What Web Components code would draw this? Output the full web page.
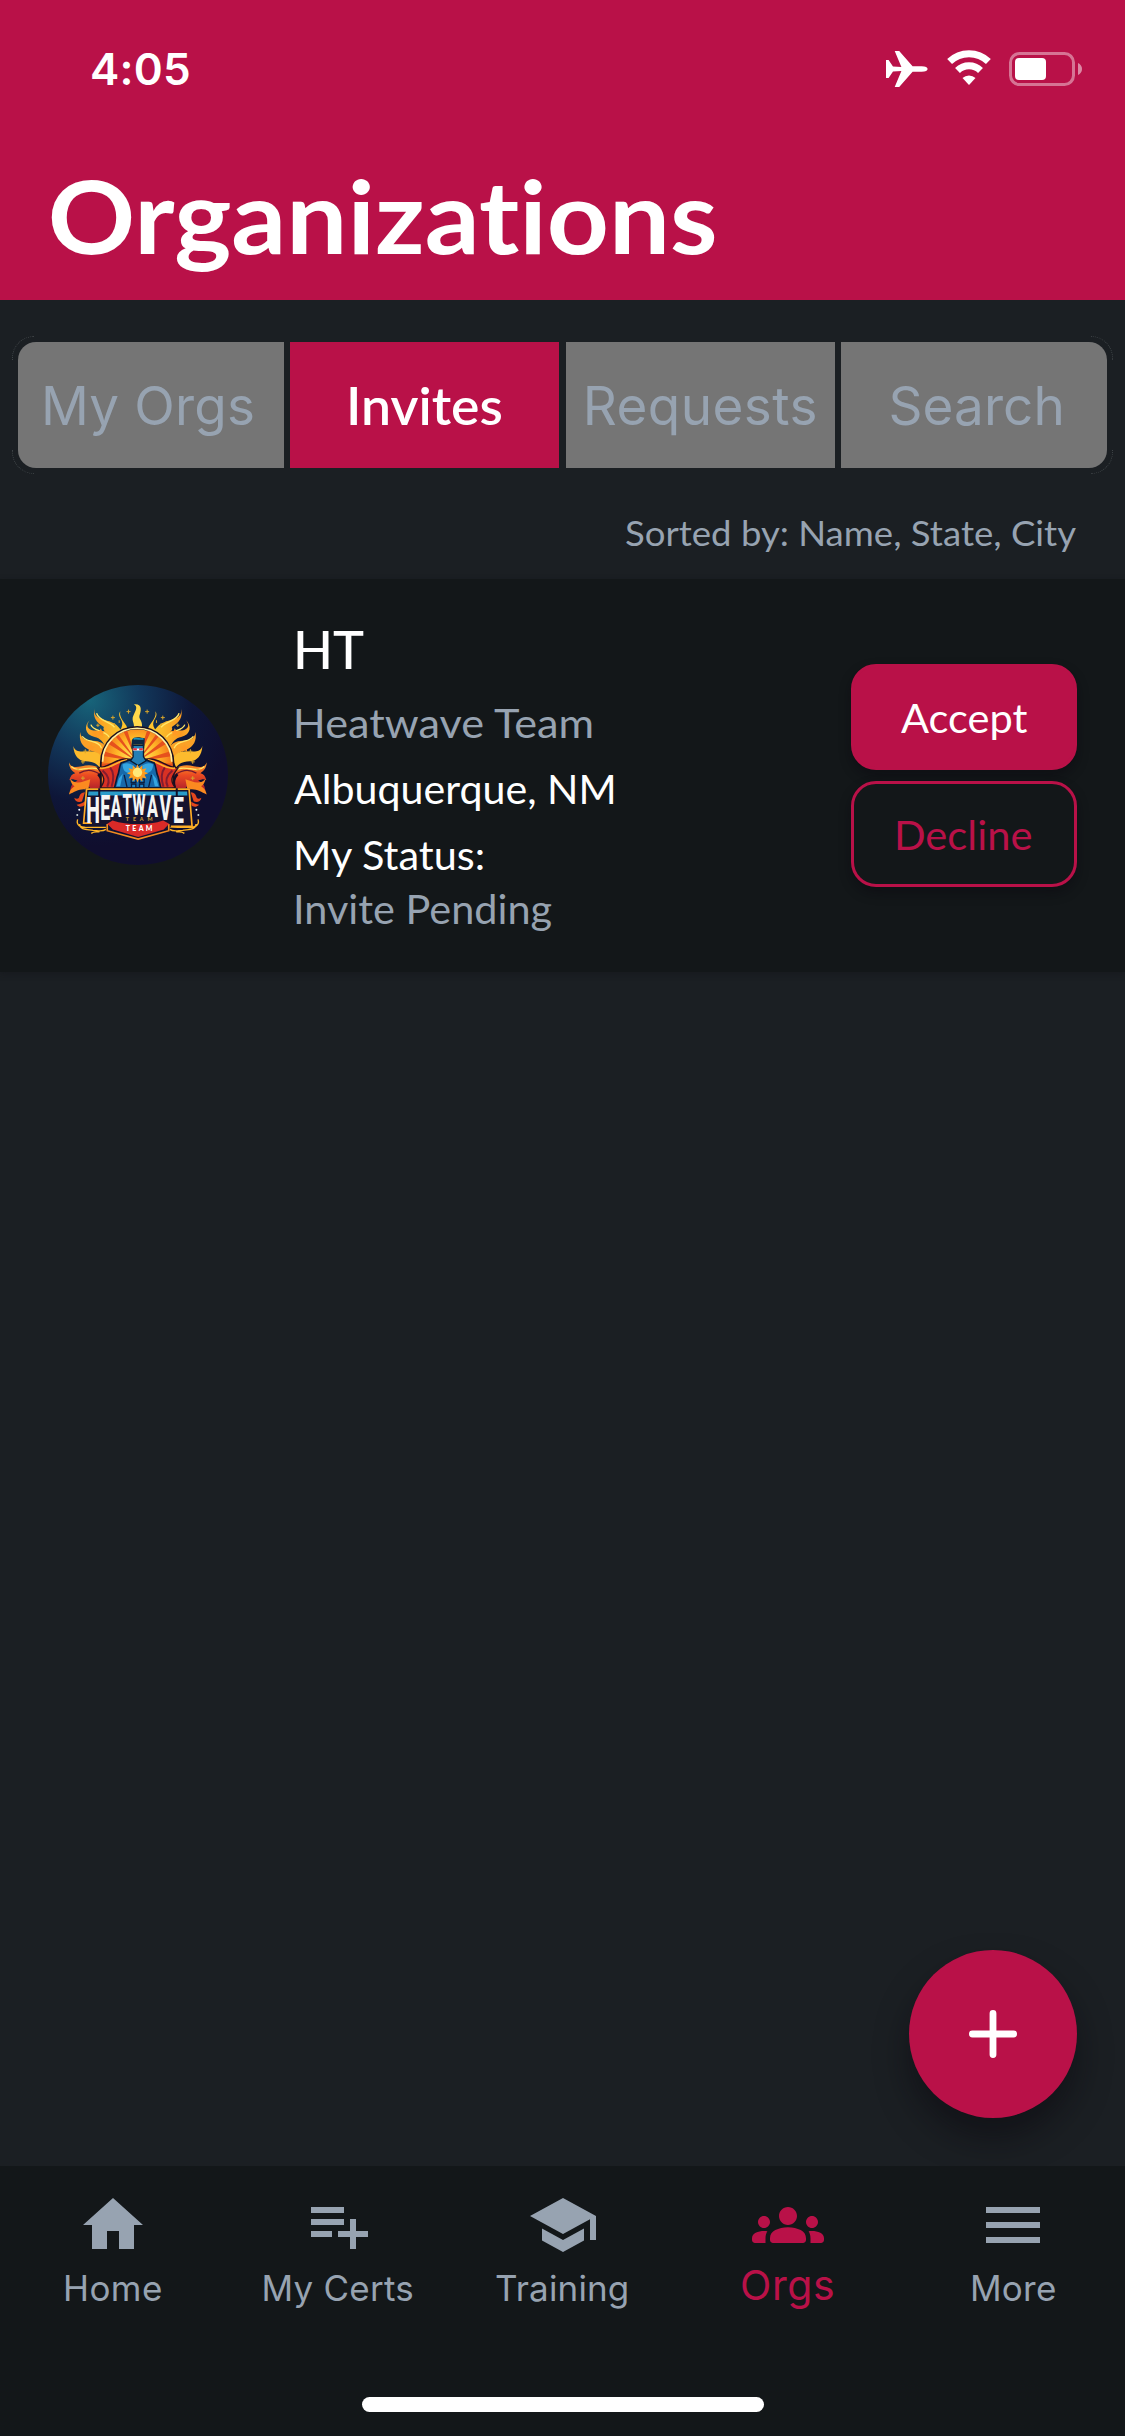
<!DOCTYPE html>
<html lang="en">
<head>
<meta charset="utf-8">
<title>Organizations</title>
<style>
  html, body { margin: 0; padding: 0; }
  body { width: 1125px; height: 2436px; overflow: hidden; background: #1b1f23; font-family: Lato, "Open Sans", sans-serif; }
</style>
</head>
<body>
<orgs-screen></orgs-screen>
<script>
const define = (name, html, setup) => customElements.define(name, class extends HTMLElement {
  constructor() {
    super();
    this.attachShadow({ mode: 'open' }).innerHTML = html;
  }
  connectedCallback() { if (setup) setup(this, this.shadowRoot); }
});

/* One line of text whose drawn glyphs span exactly `w` pixels.
   face="ui" spreads the letters, the default face widens them. */
customElements.define('fit-text', class extends HTMLElement {
  connectedCallback() {
    const a = n => this.getAttribute(n);
    const ui = a('face') === 'ui';
    const size = +a('size'), w = +a('w'), line = +a('line') || size * 1.2, weight = a('weight') || 400;
    const family = ui ? 'Inter, "Liberation Sans", sans-serif' : 'Lato, "Open Sans", sans-serif';
    const text = this.textContent;
    const ctx = document.createElement('canvas').getContext('2d');
    ctx.font = `${weight} ${size}px ${family}`;
    ctx.letterSpacing = '0.02px';
    const m = ctx.measureText(text);
    const ink = m.actualBoundingBoxRight + m.actualBoundingBoxLeft;
    const left = m.actualBoundingBoxLeft;
    const track = ui ? (w - ink) / (text.length - 1) : 0.02;
    const sx = ui ? 1 : w / ink;
    this.attachShadow({ mode: 'open' }).innerHTML = `<style>
      :host { display: block; flex: none; width: ${w}px; height: ${line}px; }
      span { display: inline-block; white-space: nowrap; font: ${weight} ${size}px/${line}px ${family}; font-variant-ligatures: none;
        letter-spacing: ${track}px; transform-origin: 0 50%; transform: scaleX(${sx}) translateX(${left}px); }
    </style><span><slot></slot></span>`;
  }
});

const ICONS = {
  home: 'M10 20v-6h4v6h5v-8h3L12 3 2 12h3v8z',
  certs: 'M14 10H3v2h11v-2zm0-4H3v2h11V6zm4 8v-4h-2v4h-4v2h4v4h2v-4h4v-2h-4zM3 16h7v-2H3v2z',
  training: 'M5 13.18v4L12 21l7-3.82v-4L12 17l-7-3.82zM12 3L1 9l11 6 9-4.91V17h2V9L12 3z',
  orgs: 'M12 12.75c1.63 0 3.07.39 4.24.9 1.08.48 1.76 1.56 1.76 2.73V17c0 .55-.45 1-1 1H7c-.55 0-1-.45-1-1v-.61c0-1.18.68-2.26 1.76-2.73 1.17-.52 2.61-.91 4.24-.91zM4 13c1.1 0 2-.9 2-2s-.9-2-2-2-2 .9-2 2 .9 2 2 2zm1.13 1.1c-.37-.06-.74-.1-1.13-.1-.99 0-1.93.21-2.78.58C.48 14.9 0 15.62 0 16.43V17c0 .55.45 1 1 1h3.5v-1.61c0-.83.23-1.61.63-2.29zM20 13c1.1 0 2-.9 2-2s-.9-2-2-2-2 .9-2 2 .9 2 2 2zm4 3.43c0-.81-.48-1.53-1.22-1.85-.85-.37-1.79-.58-2.78-.58-.39 0-.76.04-1.13.1.4.68.63 1.46.63 2.29V18H23c.55 0 1-.45 1-1v-.57zM12 6c1.66 0 3 1.34 3 3s-1.34 3-3 3-3-1.34-3-3 1.34-3 3-3z',
  more: 'M3 18h18v-2H3v2zm0-5h18v-2H3v2zm0-7v2h18V6H3z'
};

define('status-bar', `<style>
  :host { display: flex; justify-content: space-between; align-items: flex-start; height: 138px; padding: 0 42px 0 92px; box-sizing: border-box; }
  fit-text { margin-top: 42px; }
  .icons { display: flex; gap: 19px; margin-top: 50px; }
  svg { display: block; }
</style>
<fit-text face="ui" weight="600" size="44" w="97" line="54">4:05</fit-text>
<div class="icons">
  <svg width="42" height="38" viewBox="0 0 42 38" fill="#fff"><path d="M0 10h2.6l4.4 6.6 8.400.3L8.700 1h4.500l13.400 15.200h9c4 0 6 1.300 6 2.800s-2 2.800-6 2.800h-9L13.200 37H8.700l6.700-15.900-8.400.3L2.600 28H0V19z"/></svg>
  <svg width="44" height="38" viewBox="0 0 44 38" fill="none" stroke="#fff"><path d="M2.600 11.500a28 28 0 0 1 38.800 0" stroke-width="7"/><path d="M10.500 20.500a16.500 16.500 0 0 1 23 0" stroke-width="7"/><path d="M15.500 28a9.500 9.500 0 0 1 13 0L22 35z" fill="#fff" stroke="none"/></svg>
  <svg width="74" height="38" viewBox="0 0 74 38" style="margin-left:-1px"><rect x="1.500" y="3.500" width="63" height="31" rx="9" fill="none" stroke="#fff" stroke-opacity=".42" stroke-width="3"/><rect x="6" y="8" width="31" height="22" rx="4" fill="#fff"/><path d="M69 13c2.500 1 4 3.400 4 6s-1.500 5-4 6z" fill="#fff" fill-opacity=".5"/></svg>
</div>`);

define('app-header', `<style>
  :host { display: block; height: 300px; background: #b91148; color: #fff; flex: none; }
  .title { display: flex; padding: 17px 0 0 51px; }
</style>
<status-bar></status-bar>
<div class="title"><fit-text weight="700" size="101" w="664" line="120">Organizations</fit-text></div>`);

define('segment-tab', `<style>
  :host { display: flex; align-items: center; justify-content: center; height: 126px; background: #757575; color: #97a3b1; box-sizing: border-box; }
  :host([active]) { background: #b91148; color: #fff; }
</style><slot></slot>`);

define('segment-bar', `<style>
  :host { display: block; padding: 36px 12px 0; }
  .frame { position: relative; padding: 6px; }
  .row { display: grid; grid-template-columns: 266px 269px 269px 266px; justify-content: space-between; border-radius: 18px; overflow: hidden; }
  i { position: absolute; width: 22px; height: 24px; box-sizing: border-box; border: 0 dotted #3f4447; }
  .tl { left: 0; top: 0; border-width: 1px 0 0 1px; border-top-left-radius: 23px; }
  .tr { right: 0; top: 0; border-width: 1px 1px 0 0; border-top-right-radius: 23px; }
  .bl { left: 0; bottom: 0; border-width: 0 0 1px 1px; border-bottom-left-radius: 23px; }
  .br { right: 0; bottom: 0; border-width: 0 1px 1px 0; border-bottom-right-radius: 23px; }
</style>
<div class="frame"><i class="tl"></i><i class="tr"></i><i class="bl"></i><i class="br"></i>
<div class="row">
  <segment-tab><fit-text face="ui" size="53" w="208" line="64" style="margin:2px 4px 0 0">My Orgs</fit-text></segment-tab>
  <segment-tab active><fit-text weight="600" size="52.500" w="152" line="60" style="margin-left:3px">Invites</fit-text></segment-tab>
  <segment-tab><fit-text face="ui" size="53" w="229" line="64" style="margin:2px 0 0 2px">Requests</fit-text></segment-tab>
  <segment-tab><fit-text face="ui" size="53" w="170" line="64" style="margin:2px 0 0 5px">Search</fit-text></segment-tab>
</div></div>`);

define('action-button', `<style>
  :host { display: flex; align-items: center; justify-content: center; width: 226px; height: 106px; box-sizing: border-box; border-radius: 25px; border: 3px solid #b91148; background: #b91148; color: #fff; box-shadow: 0 6px 12px rgba(10,8,14,.42); }
  :host([outline]) { background: #131719; color: #b91148; }
</style><slot></slot>`);

define('team-logo', `<style>:host { display: block; width: 180px; height: 180px; } svg { display: block; }</style>
<svg width="180" height="180" viewBox="54 45 541 541">
  <defs>
    <radialGradient id="bg" gradientUnits="userSpaceOnUse" cx="180" cy="90" r="440"><stop offset="0" stop-color="#17647a"/><stop offset=".35" stop-color="#12375a"/><stop offset=".7" stop-color="#0e1638"/><stop offset="1" stop-color="#100e2e"/></radialGradient>
    <linearGradient id="fl" gradientUnits="userSpaceOnUse" x1="120" y1="0" x2="270" y2="0"><stop offset="0" stop-color="#ffd23a"/><stop offset=".5" stop-color="#fb9a20"/><stop offset="1" stop-color="#f9c52e"/></linearGradient>
    <radialGradient id="sun" gradientUnits="userSpaceOnUse" cx="322" cy="265" r="105"><stop offset="0" stop-color="#fff06a"/><stop offset=".6" stop-color="#ffb627"/><stop offset="1" stop-color="#f4761c"/></radialGradient>
    <linearGradient id="cape" x1="0" y1="0" x2="0" y2="1"><stop offset="0" stop-color="#ffac27"/><stop offset=".45" stop-color="#ec4a22"/><stop offset="1" stop-color="#a81a2c"/></linearGradient>
    <clipPath id="sc"><path d="M215 355v-75a107 102 0 0 1 214 0v75z"/></clipPath>
    <g id="half">
      <path d="M271 124c-12 20 16 26 3 51l-8 14 27-7c3-20-27-31-22-58z" fill="#ffc42c"/>
      <path d="M195 113c-9 34 26 35 48 43 20 7 26 20 38 32l-35 26c-9-29-31-28-24-43-22-12-36-29-27-58z" fill="url(#fl)"/>
      <path d="M180 150c-18 21 0 33 20 32 28-1 45 8 51 28l-22 28c-7-22-19-34-35-37-30-7-33-34-14-51z" fill="url(#fl)"/>
      <path d="M151 186c1 25 25 26 45 27 20 2 31 12 35 25l-13 30c-10-20-25-22-39-28-23-10-33-28-28-54z" fill="#fba126"/>
      <path d="M130 228c6 22 27 16 49 16 23 0 36 9 40 26l-10 22c-14-16-24-17-42-18-21-1-35-17-37-46z" fill="#fdbb2d"/>
      <path d="M117 277c9 25 34 10 60 9 30 0 39 20 78 12l-14 57h-60c-10-16-24-14-38-8-9 3-16 8-22 19 0-17 7-27 22-33-12-5-18-6-25-2 3-12 9-20 18-21-13-9-19-18-19-35z" fill="url(#cape)"/>
      <path d="M120 327c19 22 42 6 61 1l-6 32c-25-6-39 6-58 14 3-15 10-21 17-25-6-2-11-9-14-22z" fill="#fb8a20"/>
      <path d="M133 384c2 13 14 14 23 11l9-28c-11 2-15 5-18 17-3 4-8 4-14 0zM140 405c10 10 18 6 26 0v-11c-9 6-16 11-26 11z" fill="#e4471d"/>
      <path d="M148 310c18-11 39-12 61 3 16 12 30 9 48 2" fill="none" stroke="#6f1730" stroke-width="4"/>
      <path d="M124 290c21 20 47-1 75 6 20 7 33 12 55 4M200 130c6 23 39 24 54 42M157 199c11 20 49 10 58 36M183 164c5 21 43 15 55 38" fill="none" stroke="#ffe668" stroke-width="4"/>
      <path d="M213 352c6-15 1-29-8-39" fill="none" stroke="#130f25" stroke-width="8"/>
      <path d="M213 175l3 8 9 1-7 6 2 9-8-5-8 5 2-9-7-6 9-1zM184 222l3 8 9 1-7 6 2 9-8-5-8 5 2-9-7-6 9-1z" fill="#ff9a25"/>
      <path d="M249 137v12M243 143h12M296 119v12M290 125h12M166 238v12M160 244h12M159 270v12M153 276h12M159 319v12M153 325h12M204 161v10M199 166h10M254 160v8M268 151v8M140 300h8" stroke="#d7a52c" stroke-width="3"/>
      <path d="M143 449c-5 18 9 26 31 24h54M149 463c1 19 23 16 40 19 13 0 27 6 39-3M184 491c9-7 17-3 25-5" fill="none" stroke="#ffb527" stroke-width="4"/>
      <circle cx="148" cy="420" r="3" fill="#fff"/><circle cx="142" cy="436" r="3" fill="#cbd8d6"/>
    </g>
  </defs>
  <circle cx="324.500" cy="315.500" r="270.500" fill="url(#bg)"/>
  <use href="#half"/><use href="#half" transform="translate(648 0) scale(-1 1)"/>
  <path d="M312 103c28-3 21 22 17 34-4 12 15 17 5 46h-24c9-22-8-29 1-47 7-15 14-26 1-33z" fill="#ffd84a"/>
  <path d="M210 280a112 112 0 0 1 224 0v75H210z" fill="#1a1020"/>
  <g clip-path="url(#sc)"><rect x="210" y="170" width="224" height="190" fill="url(#sun)"/>
    <path d="M322 275L214 242v16zM322 275L226 216l7-13zM322 275L248 189l10-6zM322 275L278 178l12-3zM322 275L354 175l12 3zM322 275L386 183l10 6zM322 275L411 203l7 13zM322 275L430 242v16zM322 275L210 282v14zM322 275L434 282v14z" fill="#e6511d"/></g>
  <path d="M218 276a104 101 0 0 1 208 0" fill="none" stroke="#fff1a2" stroke-width="5"/>
  <path d="M296 268c-35-6-55 25-93 26 20 26 26 38 8 60h226c-18-22-12-34 8-60-38-1-58-32-93-26z" fill="#d93124" stroke="#24121d" stroke-width="4"/>
  <path d="M292 270c-28 2-52 30-82 25M354 270c28 2 52 30 82 25" fill="none" stroke="#ffb12a" stroke-width="5"/>
  <path d="M218 302c18 15 22 33 14 49M241 293c12 15 10 39 4 58M428 302c-18 15-22 33-14 49M405 293c-12 15-10 39-4 58" fill="none" stroke="#821c30" stroke-width="6"/>
  <path d="M297 271l-23 8c-8 13-4 27-12 42l-8 33h139l-8-33c-8-15-4-29-12-42l-23-8z" fill="#1769aa" stroke="#091a37" stroke-width="5"/>
  <path d="M278 284c10-6 24-4 33 4l-4 21c-18 3-28-5-29-25zM370 284c-10-6-24-4-33 4l4 21c18 3 28-5 29-25zM267 326l12-15-8 38h-11zM379 326l-12-15 8 38h11z" fill="#35a5e0"/>
  <path d="M283 315l9 39M365 315l-9 39M304 328h14v10h-14zM329 328h14v10h-14zM305 343h13v11h-13zM329 343h13v11h-13z" fill="#1f82c5" stroke="#0a1e42" stroke-width="4"/>
  <path d="M309 226h32v35l8 12-24 14-23-14 8-12z" fill="#247fb5" stroke="#0b1c32" stroke-width="4"/>
  <path d="M304 239l2-28c6-14 29-7 39-6l-2 31-5-12h-27z" fill="#0b2843"/><path d="M311 207c10-3 20 2 30 0" stroke="#1c92bf" stroke-width="5"/>
  <path d="M309 236h31v6h-31z" fill="#fff"/><path d="M310 238h11M328 238h11" stroke="#e62d3c" stroke-width="6"/>
  <path d="M323 283l5 12 9-9 1 12 12-3-6 11 11 4-11 5 6 11-12-3-1 12-9-9-5 12-5-12-9 9-1-12-12 3 6-11-11-5 11-4-6-11 12 3 1-12 9 9z" fill="#ff9c1e"/><circle cx="323" cy="308" r="14" fill="#ffe879"/>
  <path d="M167 356h314l9 113-68 4-97 36-95-47-63 8z" fill="#17132e"/>
  <path d="M186 460h-25l9-102h308l9 112h-64" fill="none" stroke="#ffab25" stroke-width="5"/>
  <path d="M176 365h296l1 12H174z" fill="#299cc9"/><path d="M208 355v24M441 355v24" stroke="#120f28" stroke-width="6"/>
  <path d="M232 463v20l93 25 92-25v-20" fill="none" stroke="#f28b20" stroke-width="5"/>
  <path d="M248 452c24 8 48 11 76 11s54-3 76-11l18 10-16 17-77 23-76-23-17-17z" fill="#d92a28"/>
  <text transform="scale(.52 1)" font-family="Roboto, sans-serif" font-weight="800" fill="#f4f5f5"><tspan x="325" y="459" font-size="112">H</tspan><tspan x="406" y="450" font-size="103">E</tspan><tspan x="465" y="443" font-size="94">A</tspan><tspan x="534" y="436" font-size="86">T</tspan><tspan x="592" y="436" font-size="86">W</tspan><tspan x="676" y="443" font-size="94">A</tspan><tspan x="748" y="450" font-size="103">V</tspan><tspan x="826" y="459" font-size="112">E</tspan></text>
  <g font-family="Lato, sans-serif" font-weight="900"><text x="288" y="453" font-size="16" textLength="80" fill="#c99b37">TEAM</text>
  <text x="288" y="485" font-size="21" textLength="80" fill="#fff">TEAM</text></g>
</svg>`);

define('org-card', `<style>
  :host { display: flex; height: 393px; box-sizing: border-box; background: #131719; padding: 0 48px; box-shadow: 0 2px 6px rgba(16,18,22,.35); }
  team-logo { margin-top: 106px; flex: none; }
  .info { display: flex; flex-direction: column; margin-left: 68px; padding-top: 40px; flex: 1; color: #fff; }
  .muted { color: #97a3b1; }
  .actions { display: flex; flex-direction: column; gap: 11px; padding-top: 85px; }
</style>
<team-logo></team-logo>
<div class="info">
  <fit-text weight="500" size="52.500" w="67" line="60" style="margin-left:1px">HT</fit-text>
  <fit-text class="muted" size="40.500" w="297" line="54" style="margin-top:17px">Heatwave Team</fit-text>
  <fit-text size="40.500" w="319" line="54" style="margin:12px 0 0 -2px">Albuquerque, NM</fit-text>
  <fit-text size="40.500" w="188" line="54" style="margin-top:12px">My Status:</fit-text>
  <fit-text class="muted" size="40.500" w="256" line="54">Invite Pending</fit-text>
</div>
<div class="actions">
  <action-button><fit-text size="40.500" w="127" line="50" style="margin-top:1px">Accept</fit-text></action-button>
  <action-button outline><fit-text size="40.500" w="134" line="50" style="margin-top:1px">Decline</fit-text></action-button>
</div>`);

define('fab-button', `<style>
  :host { position: absolute; right: 48px; bottom: 48px; width: 168px; height: 168px; border-radius: 50%; background: #b91148; display: flex; align-items: center; justify-content: center; box-shadow: 0 20px 32px rgba(10,8,14,.5); }
</style><svg width="48" height="48" viewBox="0 0 48 48" stroke="#fff" stroke-width="6.800" stroke-linecap="round"><path d="M24 3.400v41.200M3.400 24h41.200"/></svg>`);

define('nav-item', `<style>
  :host { display: flex; flex-direction: column; align-items: center; width: 225px; padding-top: 23px; box-sizing: border-box; color: #97a3b1; }
  :host([active]) { color: #b91148; }
  svg { display: block; margin-bottom: 6px; }
</style><svg width="72" height="72" viewBox="0 0 24 24" fill="currentColor"><path/></svg><slot></slot>`,
  (el, root) => root.querySelector('path').setAttribute('d', ICONS[el.getAttribute('icon')]));

define('nav-bar', `<style>
  :host { display: flex; flex-direction: column; justify-content: space-between; align-items: center; height: 270px; flex: none; background: #131719; box-sizing: border-box; padding-bottom: 24px; }
  .items { display: flex; }
  .indicator { width: 402px; height: 15px; border-radius: 8px; background: #fff; }
</style>
<div class="items">
  <nav-item icon="home"><fit-text face="ui" size="35" w="95" line="42" style="margin-left:2px">Home</fit-text></nav-item>
  <nav-item icon="certs"><fit-text face="ui" size="35" w="148" line="42" style="margin-left:2px">My Certs</fit-text></nav-item>
  <nav-item icon="training"><fit-text face="ui" size="35" w="131" line="42" style="margin-right:2px">Training</fit-text></nav-item>
  <nav-item icon="orgs" active><fit-text face="ui" size="41" w="91" line="36">Orgs</fit-text></nav-item>
  <nav-item icon="more"><fit-text face="ui" size="35" w="82" line="42" style="margin-left:3px">More</fit-text></nav-item>
</div>
<div class="indicator"></div>`);

define('orgs-screen', `<style>
  :host { display: flex; flex-direction: column; width: 1125px; height: 2436px; background: #1b1f23; }
  main { position: relative; flex: 1; display: flex; flex-direction: column; overflow: hidden; }
  .sorted { display: flex; justify-content: flex-end; color: #97a3b1; padding: 37px 49px 0 0; height: 68px; }
</style>
<app-header></app-header>
<main>
  <segment-bar></segment-bar>
  <div class="sorted"><fit-text size="35" w="450" line="42">Sorted by: Name, State, City</fit-text></div>
  <org-card></org-card>
  <fab-button></fab-button>
</main>
<nav-bar></nav-bar>`);
</script>
</body>
</html>
